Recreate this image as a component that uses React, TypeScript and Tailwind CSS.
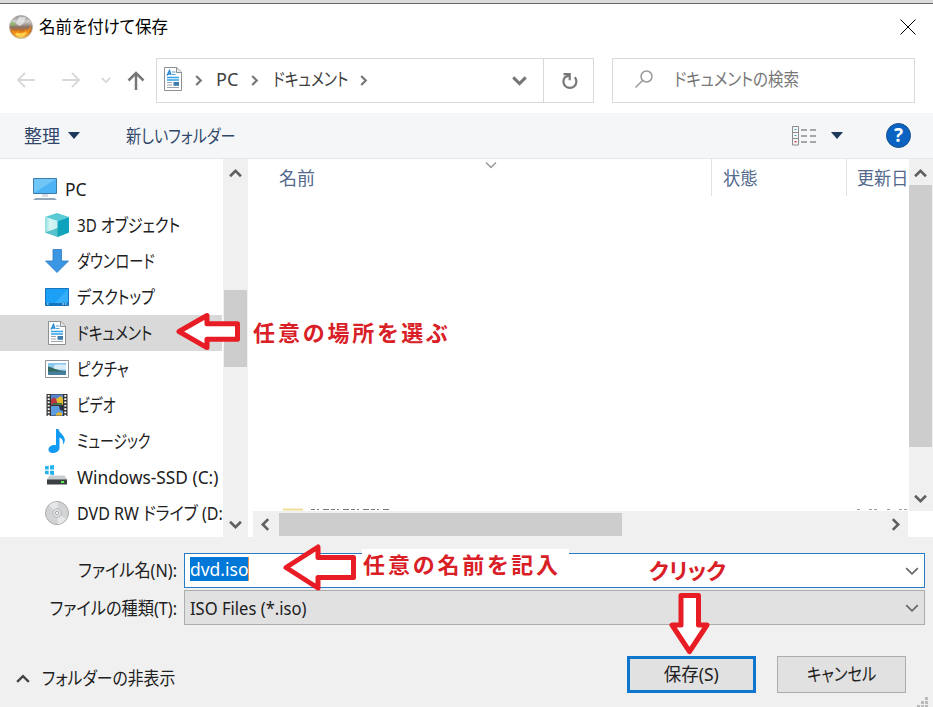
import type { ReactNode } from 'react';

type IconName = 'pc' | 'cube' | 'download' | 'desktop' | 'document' | 'picture' | 'video' | 'music' | 'drive' | 'disc';

interface TreeItem {
    label: string;
    icon: IconName;
    fit: string;
    root?: boolean;
    selected?: boolean;
}

const treeItems: TreeItem[] = [
    { label: 'PC', icon: 'pc', fit: 'scale-x-[.97]', root: true },
    { label: '3D オブジェクト', icon: 'cube', fit: 'scale-x-[.84]' },
    { label: 'ダウンロード', icon: 'download', fit: 'scale-x-[.79]' },
    { label: 'デスクトップ', icon: 'desktop', fit: 'scale-x-[.83]' },
    { label: 'ドキュメント', icon: 'document', fit: 'scale-x-[.82]', selected: true },
    { label: 'ピクチャ', icon: 'picture', fit: 'scale-x-[.81]' },
    { label: 'ビデオ', icon: 'video', fit: 'scale-x-[.77]' },
    { label: 'ミュージック', icon: 'music', fit: 'scale-x-[.77]' },
    { label: 'Windows-SSD (C:)', icon: 'drive', fit: 'scale-x-[.96]' },
    { label: 'DVD RW ドライブ (D:', icon: 'disc', fit: 'scale-x-[.89]' },
];

const Chevron = ({ dir, className }: { dir: 'up' | 'down' | 'left' | 'right'; className: string }) => {
    const paths = {
        up: 'M1 8.5 6 3.5l5 5',
        down: 'M1 3.5l5 5 5-5',
        left: 'M8.5 1 3.5 6l5 5',
        right: 'M3.5 1l5 5-5 5',
    };
    return (
        <svg viewBox="0 0 12 12" className={`shrink-0 fill-none stroke-current ${className}`}>
            <path d={paths[dir]} />
        </svg>
    );
};

const Caret = ({ className = '' }: { className?: string }) => (
    <svg viewBox="0 0 12 7" className={`w-3 h-[7px] fill-[#1e395b] ${className}`}>
        <path d="M0 0h12L6 7z" />
    </svg>
);

const DocumentIcon = () => (
    <svg viewBox="0 0 24 24" className="size-6 shrink-0">
        <path d="M3.500.5h12.300l4.700 4.500v18.500h-17z" fill="#fff" stroke="#8b9094" />
        <path d="M15.500.8v4.700h4.800" fill="#e8e8e8" stroke="#8b9094" />
        <path d="M6 8.500 8.500 3.500 10 8M7 7h2.500" fill="none" stroke="#1e86d0" strokeWidth="1.300" />
        <path d="M11 5h3.500M11 7.500h3.500" stroke="#5b9fd4" />
        <path d="M6 10.500h12M6 13h12" stroke="#31a0e4" strokeWidth="1.400" />
        <path d="M6 15.500h5M6 18h5M6 20.500h12" stroke="#9aa4ad" strokeWidth="1.100" />
        <path d="M12.500 15h5.500v3.800h-5.500z" fill="#3e7cad" />
    </svg>
);

const icons: Record<IconName, ReactNode> = {
    pc: (
        <svg viewBox="0 0 24 24" className="size-6">
            <path d="M.5 1.500h23v15H.5z" fill="#4cb4f5" stroke="#3d7ca8" />
            <path d="M1 2h22L1 16z" fill="#8ad2fa" opacity=".6" />
            <path d="M9 17h6v3H9z" fill="#d3dce4" />
            <path d="M2.500 21h19L24 23H0z" fill="#8fa5b8" />
        </svg>
    ),
    cube: (
        <svg viewBox="0 0 24 24" className="size-6">
            <defs>
                <linearGradient id="cubeLeft" x2="1" y2="0">
                    <stop offset="0" stopColor="#8fdcdf" />
                    <stop offset=".4" stopColor="#d5f5f3" />
                    <stop offset="1" stopColor="#c2eef0" />
                </linearGradient>
            </defs>
            <path d="M0 4 12 0l12 4-11.500 4z" fill="#58cbd5" />
            <path d="M0 4l12.500 4v16L0 19.500z" fill="url(#cubeLeft)" />
            <path d="M12.500 8 24 4v15.500L12.500 24z" fill="#0fa2bd" />
            <path d="M12.500 15 24 19.500 12.500 24 0 19.500z" fill="#16a7b8" opacity=".65" />
        </svg>
    ),
    download: (
        <svg viewBox="0 0 24 24" className="size-6">
            <path d="M8 .5h8.500V12h7L12 23.500.5 12H8z" fill="#3b97e3" stroke="#2f79c4" strokeWidth=".8" />
        </svg>
    ),
    desktop: (
        <svg viewBox="0 0 24 24" className="size-6">
            <path d="M.5 3.500h23v17H.5z" fill="#1ba0f5" stroke="#1775bd" />
            <path d="M23 4v13L8 20z" fill="#40b4fb" opacity=".7" />
            <path d="M1 19h22" stroke="#0e68ad" strokeWidth="1.500" />
            <path d="M2 19h1.500m14 0h1.500m1 0h1.500" stroke="#fff" strokeWidth="1.200" />
        </svg>
    ),
    document: <DocumentIcon />,
    picture: (
        <svg viewBox="0 0 24 24" className="size-6">
            <path d="M.5 3.500h23v17H.5z" fill="#fff" stroke="#8e9499" />
            <path d="M3 6h18v12H3z" fill="#8bc8ee" />
            <path d="M9 8.500c4-2 7 0 12-1v5H9z" fill="#d8edf8" />
            <path d="M3 9.500c5 1 8 4 18 4.500v1H3z" fill="#35685e" />
            <path d="M3 14.500h18V18H3z" fill="#477f9f" />
        </svg>
    ),
    video: (
        <svg viewBox="0 0 24 24" className="size-6">
            <path d="M1.500 1h21v22h-21z" fill="#343434" />
            <path d="M6 1.500h12v10H6z" fill="#5484cc" />
            <path d="M6 13h12v9.500H6z" fill="#5d9cde" />
            <path d="M6 7c2-3 4-3 6 0v4.500H6z" fill="#bc3442" />
            <path d="M11 6l5-3 2 3v5.500h-5z" fill="#e3be32" />
            <path d="M8 10h9v1.500H8z" fill="#377440" />
            <path d="M14 13h4v5l-3-1z" fill="#28344a" />
            <path d="M11 21l3-2 3 1v2.500h-6z" fill="#e8b62c" />
            <path d="M3.700 2v21M20.300 2v21" stroke="#fff" strokeWidth="2" strokeDasharray="1.700 1.600" />
        </svg>
    ),
    music: (
        <svg viewBox="0 0 24 24" className="size-6">
            <path d="M11 0h2.500c.5 4 6.500 6.500 6.300 11 0 2-1 3.500-1.800 4.500.5-4-1-6-3.500-7v10.200C14.500 22 11 24 7.500 24 5 24 3.500 22.700 3.500 20.800c0-3 3.500-5.200 7.500-4.600z" fill="#129bf4" />
        </svg>
    ),
    drive: (
        <svg viewBox="0 0 24 24" className="size-6">
            <path d="M0 1.300 3.700.8v3.700H0zM5 .6 9 0v4.500H5zM0 5.700h3.700v3.700L0 8.900zM5 5.700h4v4.500l-4-.6z" fill="#25b3ec" />
            <path d="M4.500 10.500h15l2.500 4H2z" fill="#c8cccf" />
            <path d="M2 14h20v5.500H2z" fill="#3b4043" />
            <path d="M2 14.500h20" stroke="#7b8286" />
            <path d="M16 17h3" stroke="#5af04f" strokeWidth="2" />
        </svg>
    ),
    disc: (
        <svg viewBox="0 0 24 24" className="size-6">
            <circle cx="12" cy="12" r="11.500" fill="#d2d3d4" stroke="#a8abae" />
            <path d="M12 12 4 4.500A11 11 0 0 1 13 1zM12 12l9 6a11 11 0 0 1-8 5z" fill="#e6e7e7" />
            <circle cx="12" cy="12" r="4.200" fill="#e2e3e4" stroke="#b3b5b7" />
            <circle cx="12" cy="12" r="1.600" fill="#fff" stroke="#a5a7a9" />
        </svg>
    ),
};

const TitleBar = () => (
    <div className="flex items-center h-[46px] pl-[9px] pr-[17px]">
        <svg viewBox="0 0 24 24" className="size-6">
            <defs>
                <linearGradient id="disc" x2="0" y2="1">
                    <stop offset="0" stopColor="#858585" />
                    <stop offset=".25" stopColor="#d2d2d2" />
                    <stop offset=".5" stopColor="#887467" />
                    <stop offset=".7" stopColor="#d66b13" />
                    <stop offset="1" stopColor="#f5d76c" />
                </linearGradient>
            </defs>
            <circle cx="12" cy="12" r="11.500" fill="url(#disc)" stroke="#b5aaa0" strokeWidth=".8" />
            <path d="M10 1.500 7 9l4 2 3-2 3-7z" fill="#eee" opacity=".7" />
            <path d="M2 13c2 5 3 1 5 4 2-5 4 2 6-1 2 3 3-4 5-1 2 1 2-3 4-4-1 8-5 11-10 11S3 20 2 13z" fill="#ef8d19" />
            <path d="M6 19c3-3 4 1 6-1 2 1 4-2 6 0-3 5-9 5-12 1z" fill="#ffd350" />
            <circle cx="4" cy="9" r="2" fill="#78c64a" opacity=".7" />
        </svg>
        <span className="ml-[6px] text-[17px] text-black origin-left scale-x-[.97]">名前を付けて保存</span>
        <svg viewBox="0 0 16 16" className="size-4 ml-auto stroke-black">
            <path d="M.5.5l15 15M15.500.5l-15 15" />
        </svg>
    </div>
);

const NavBar = () => (
    <div className="flex items-center h-[63px] pl-4 pb-[3px]">
        <svg viewBox="0 0 20 18" className="w-5 h-[18px] fill-none stroke-[#d9d9d9] stroke-2">
            <path d="M19 9H2M9 2 2 9l7 7" />
        </svg>
        <svg viewBox="0 0 20 18" className="w-5 h-[18px] ml-[25px] fill-none stroke-[#d9d9d9] stroke-2">
            <path d="M1 9h17M11 2l7 7-7 7" />
        </svg>
        <Chevron dir="down" className="w-[10px] h-[10px] ml-[20px] text-[#d5d5d5] stroke-2" />
        <svg viewBox="0 0 18 20" className="w-[18px] h-5 ml-[16px] mt-[1px] fill-none stroke-[#777] stroke-[2.5]">
            <path d="M9 19V2M1.500 9.500 9 2l7.500 7.500" />
        </svg>
        <div className="flex ml-[11px] w-[438px] h-[45px] border border-[#d9d9d9]">
            <div className="flex flex-1 items-center pl-[4px] pr-[16px] pb-[3px] text-lg text-[#404040]">
                <DocumentIcon />
                <Chevron dir="right" className="size-[11px] ml-[8px] mt-[4px] text-[#777] stroke-[2.4]" />
                <span className="ml-[12px] w-[33px] origin-left">PC</span>
                <Chevron dir="right" className="size-[11px] mt-[4px] text-[#777] stroke-[2.4]" />
                <span className="ml-[13px] w-[82px] whitespace-nowrap origin-left scale-x-[.82]">ドキュメント</span>
                <Chevron dir="right" className="size-[11px] ml-[3px] mt-[4px] text-[#777] stroke-[2.4]" />
                <Chevron dir="down" className="size-[15px] ml-auto mt-[4px] text-[#777] stroke-[2.4]" />
            </div>
            <div className="flex w-[50px] items-center justify-center border-l border-[#d9d9d9]">
                <svg viewBox="0 0 18 18" className="size-[18px] ml-[3px] mt-px fill-none stroke-[#777] stroke-[2.2]">
                    <path d="M13.800 5.200a6.500 6.500 0 1 1-9.800 0L8 3.500M2.500 2.200h6.200v6" />
                </svg>
            </div>
        </div>
        <div className="flex items-center ml-[18px] w-[303px] h-[45px] pl-[22px] pb-[2px] border border-[#d9d9d9]">
            <svg viewBox="0 0 18 18" className="size-[18px] fill-none stroke-[#999] stroke-[1.5]">
                <circle cx="11.500" cy="6.500" r="5.500" />
                <path d="M7.500 10.500.5 17.500" />
            </svg>
            <span className="ml-[21px] text-lg text-[#777] origin-left scale-x-[.86] whitespace-nowrap">ドキュメントの検索</span>
        </div>
    </div>
);

const ToolBar = () => (
    <div className="flex items-center h-[46px] pl-6 pr-[22px] bg-[#f4f6f8] border-b border-[#e5e8ea] text-lg text-[#32486b]">
        <span>整理</span>
        <Caret className="ml-[8px]" />
        <span className="ml-[46px] origin-left scale-x-[.84] whitespace-nowrap">新しいフォルダー</span>
        <svg viewBox="0 0 25 20" className="w-[25px] h-5 ml-auto fill-none stroke-[#8c8c8c]">
            <path d="M.5.5h6v18.500h-6zM.5 6.500h6M.5 12.500h6" />
            <path d="M9 4h6m3 0h6M9 10h6m3 0h6M9 16h6m3 0h6" strokeWidth="1.500" />
            <path d="M2.500 3.500h2M2.500 9.500h2" stroke="#4b9ab5" />
            <path d="M2.500 15.700h2" stroke="#d0444e" strokeWidth="1.500" />
        </svg>
        <Caret className="ml-[14px]" />
        <span className="flex items-center justify-center size-[25px] ml-[43px] rounded-full bg-[#0b63c1] border border-[#164f8d] text-[19px] leading-none font-bold text-white">
            ?
        </span>
    </div>
);

const Sidebar = () => (
    <div className="flex w-[250px] h-[378px]">
        <div className="w-[222px] pt-[12px] overflow-hidden">
            {treeItems.map((item) => (
                <div
                    key={item.label}
                    className={`flex items-center h-9 ${item.root ? 'pl-[33px]' : 'pl-[45px]'} ${item.selected ? 'bg-[#d9d9d9]' : ''}`}
                >
                    <span className="shrink-0">{icons[item.icon]}</span>
                    <span className={`ml-2 text-lg text-[#202020] whitespace-nowrap origin-left ${item.fit}`}>{item.label}</span>
                </div>
            ))}
        </div>
        <div className="flex flex-col items-center w-[25px] ml-px pr-px bg-[#f0f0f0] text-[#606060]">
            <Chevron dir="up" className="size-[13px] mt-[8px] stroke-[2.4]" />
            <div className="w-[23px] h-[77px] mt-[110px] bg-[#cdcdcd]" />
            <Chevron dir="down" className="size-[13px] mt-auto mb-[6px] stroke-[2.4]" />
        </div>
    </div>
);

const FileList = () => (
    <div className="flex flex-col flex-1">
        <div className="flex h-[352px]">
            <div className="flex flex-col justify-between flex-1">
                <div className="flex h-[37px] text-lg text-[#52698c] overflow-hidden">
                    <div className="relative w-[461px] pl-[29px] pt-[5px]">
                        名前
                        <Chevron dir="down" className="absolute left-[235px] top-0 size-[12px] text-[#999] stroke-[1.5]" />
                    </div>
                    <div className="w-[135px] pl-[11px] pt-[5px] border-l border-[#e2e2e2]">
                        <span className="inline-block origin-left scale-x-[.96]">状態</span>
                    </div>
                    <div className="w-[62px] pl-[10px] pt-[5px] border-l border-[#e2e2e2] whitespace-nowrap">
                        <span className="inline-block origin-left scale-x-[.95]">更新日</span>
                    </div>
                </div>
                {/* top edge of the next row, cut off by the scrollbar */}
                <svg viewBox="0 0 658 3" className="w-[658px] h-[3px]">
                    <path d="M33 1.500h20" stroke="#f0dd98" strokeWidth="2" />
                    <path d="M61 1.500h78" stroke="#777" strokeDasharray="4 2 2 4 6 2" />
                    <path d="M607 1.500h20m10 0h20" stroke="#999" strokeDasharray="3 9 3 2" />
                </svg>
            </div>
            <div className="flex flex-col items-center w-6 pr-px bg-[#f0f0f0] text-[#606060]">
                <Chevron dir="up" className="size-[13px] mt-[8px] stroke-[2.4]" />
                <div className="w-[23px] h-[262px] mt-[5px] bg-[#cdcdcd]" />
                <Chevron dir="down" className="size-[13px] mt-auto mb-[6px] stroke-[2.4]" />
            </div>
        </div>
        <div className="flex items-center h-[26px] ml-[3px] mr-[25px] pl-[6px] pr-[6px] bg-[#f0f0f0] text-[#606060]">
            <Chevron dir="left" className="size-[13px] stroke-[2.4]" />
            <div className="w-[343px] h-[23px] ml-[7px] bg-[#cdcdcd]" />
            <Chevron dir="right" className="size-[13px] ml-auto stroke-[2.4]" />
        </div>
    </div>
);

const Footer = () => (
    <div className="flex flex-col flex-1 pt-4 text-lg text-[#202020]">
        <div className="flex items-center h-[35px]">
            <span className="w-[177px] pb-[2px] flex justify-end whitespace-nowrap origin-right scale-x-[.9]">ファイル名(N):</span>
            <div className="flex items-center w-[741px] h-full ml-[7px] pl-[5px] pr-[5px] bg-white border border-[#267cc7]">
                <span className="flex items-center w-[59px] h-[24px] mb-[3px] bg-[#0078d7] border-r border-[#e8914a] text-white">
                    <span className="origin-left scale-x-[.97]">dvd.iso</span>
                </span>
                <Chevron dir="down" className="size-[14px] ml-auto text-[#666] stroke-[1.4]" />
            </div>
        </div>
        <div className="flex items-center h-[35px] mt-[2px]">
            <span className="w-[177px] flex justify-end whitespace-nowrap origin-right scale-x-[.9]">ファイルの種類(T):</span>
            <div className="flex items-center w-[741px] h-full ml-[7px] pl-[5px] pr-[5px] bg-[#e1e1e1] border border-[#adadad]">
                <span className="origin-left scale-x-[.92]">ISO Files (*.iso)</span>
                <Chevron dir="down" className="size-[14px] ml-auto text-[#666] stroke-[1.4]" />
            </div>
        </div>
        <div className="flex mt-[31px] h-[37px] pl-[16px]">
            <div className="flex items-center mt-[6px]">
                <Chevron dir="up" className="size-[14px] mt-[2px] text-[#444] stroke-2" />
                <span className="ml-[12px] w-[160px] whitespace-nowrap origin-left scale-x-[.88]">フォルダーの非表示</span>
            </div>
            <button className="w-[129px] ml-auto pb-[2px] border-[3px] border-[#0f76cd] bg-[#e1e1e1]">
                <span className="inline-block whitespace-nowrap scale-x-[.97]">保存(S)</span>
            </button>
            <button className="w-[129px] ml-[21px] mr-[27px] pb-[2px] border border-[#adadad] bg-[#e1e1e1]">
                <span className="inline-block whitespace-nowrap scale-x-[.85]">キャンセル</span>
            </button>
        </div>
        <svg viewBox="0 0 12 12" className="size-3 mt-auto ml-auto mr-[4px] -mb-[2px] fill-[#bbb]">
            <path d="M8 0h3v3H8zM4 4h3v3H4zM8 4h3v3H8zM0 8h3v3H0zM4 8h3v3H4zM8 8h3v3H8z" />
        </svg>
    </div>
);

const Annotations = () => (
    <div className="absolute inset-0 pointer-events-none text-[#d92027] font-bold text-[22px] leading-none whitespace-nowrap">
        <span className="absolute left-[253px] top-[321px] tracking-[2.9px]">任意の場所を選ぶ</span>
        <div className="absolute left-[362px] top-[549px] w-[207px] h-[36px] pt-[4px] pl-px bg-white tracking-[2.9px]">任意の名前を記入</div>
        <span className="absolute left-[649px] top-[559px] origin-left">クリック</span>
        <svg viewBox="0 0 933 707" className="absolute inset-0 size-full fill-white stroke-[#e81c24] stroke-[5]" strokeLinejoin="round">
            <path d="M179 331.500 207 315.500v8.300h30.500v15.500H207v8.300z" />
            <path d="M286 567.500 318 547v10.500h35.500v20H318v10.500z" />
            <path d="M681 595.500h17.500v29.500h8.500L689.500 651.500 672 625h9z" />
        </svg>
    </div>
);

const App = () => (
    <div className="relative flex flex-col w-[933px] h-[707px] overflow-hidden bg-[#f0f0f0] font-['Noto_Sans','Noto_Sans_CJK_JP',sans-serif] [font-feature-settings:'palt']">
        <div className="h-1 bg-[#dcdcdc] border-b border-[#666]" />
        <div className="bg-white">
            <TitleBar />
            <NavBar />
            <ToolBar />
            <div className="flex">
                <Sidebar />
                <FileList />
            </div>
        </div>
        <Footer />
        <Annotations />
    </div>
);

export default App;
